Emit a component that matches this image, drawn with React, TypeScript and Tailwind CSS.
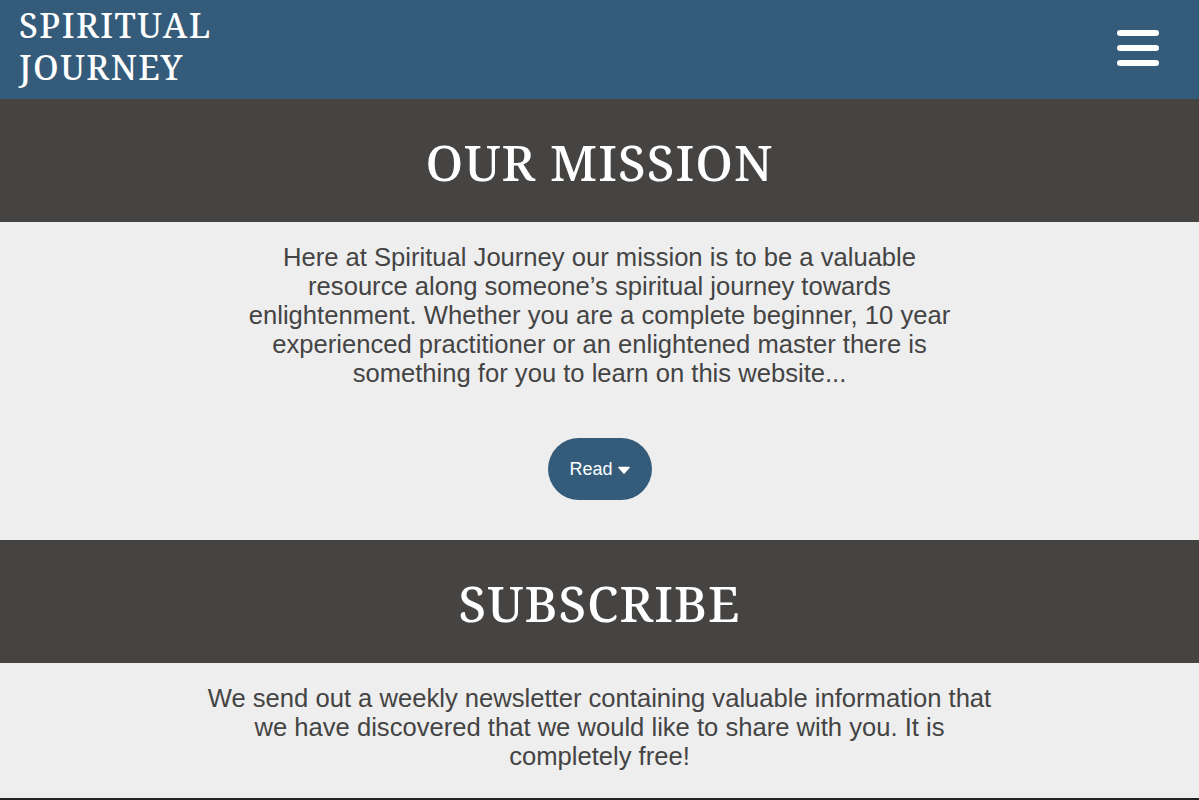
import React from "react";

const serif = { fontFamily: '"Noto Serif", "DejaVu Serif", serif' };

export default function App() {
  return (
    <div className="min-h-[800px] bg-[#eeeeee]" style={{ fontFamily: '"Liberation Sans", Arial, sans-serif' }}>
      <header className="h-[99px] bg-[#345b7a] flex items-center justify-between pl-[19px] pr-[40px]">
        <div className="text-white text-[34px] leading-[42px] tracking-[1.5px] font-medium -mt-[7px]" style={serif}>
          <div>SPIRITUAL</div>
          <div>JOURNEY</div>
        </div>
        <button className="flex flex-col gap-[9px] -mt-[3px]">
          <span className="block w-[42px] h-[6px] rounded-full bg-white" />
          <span className="block w-[42px] h-[6px] rounded-full bg-white" />
          <span className="block w-[42px] h-[6px] rounded-full bg-white" />
        </button>
      </header>

      <section>
        <div className="h-[123px] pt-[4px] bg-[#464442] flex items-center justify-center">
          <h2 className="text-white text-[50px] tracking-[1px] font-medium" style={serif}>OUR MISSION</h2>
        </div>
        <div className="pt-[21px] pb-[40px] flex flex-col items-center">
          <p className="max-w-[720px] text-center text-[25.6px] leading-[29px] text-[#444444]">
            Here at Spiritual Journey our mission is to be a valuable resource along someone’s spiritual journey towards enlightenment. Whether you are a complete beginner, 10 year experienced practitioner or an enlightened master there is something for you to learn on this website...
          </p>
          <button className="mt-[50px] w-[104px] h-[62px] rounded-full bg-[#345b7a] text-white text-[18px] flex items-center justify-center gap-[5px]">
            Read
            <svg width="12" height="8" viewBox="0 0 12 8" className="mt-[2px]">
              <path d="M1 1.5 L11 1.5 L6 7 Z" fill="white" stroke="white" strokeWidth="1.5" strokeLinejoin="round" />
            </svg>
          </button>
        </div>
      </section>

      <section>
        <div className="h-[123px] pt-[4px] bg-[#464442] flex items-center justify-center">
          <h2 className="text-white text-[50px] tracking-[1px] font-medium" style={serif}>SUBSCRIBE</h2>
        </div>
        <div className="pt-[21px] h-[135px] flex flex-col items-center">
          <p className="max-w-[800px] text-center text-[25.6px] leading-[29px] text-[#444444]">
            We send out a weekly newsletter containing valuable information that we have discovered that we would like to share with you. It is completely free!
          </p>
        </div>
      </section>
      <div className="h-[10px] bg-[#222222]" />
    </div>
  );
}
